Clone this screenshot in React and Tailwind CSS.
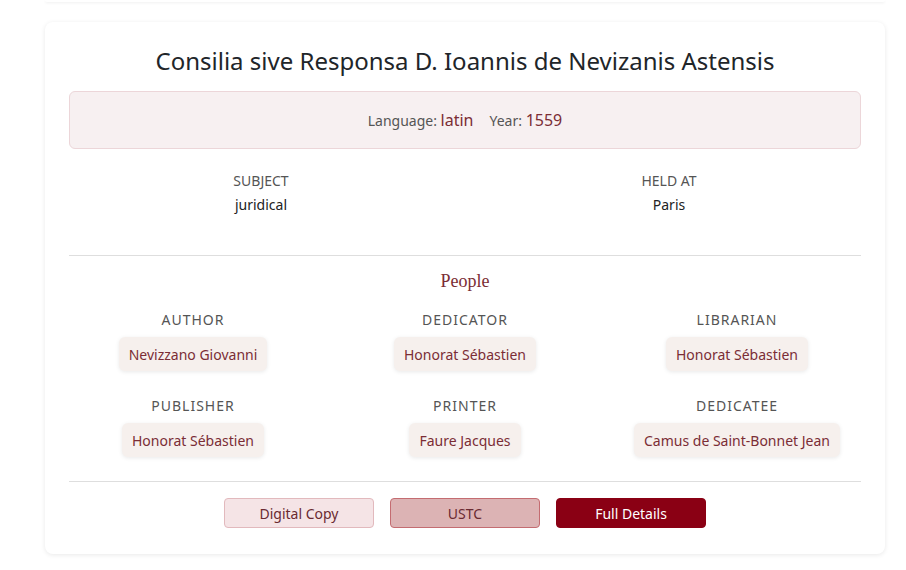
import React from 'react';

const people = [
  { role: 'Author', name: 'Nevizzano Giovanni' },
  { role: 'Dedicator', name: 'Honorat Sébastien' },
  { role: 'Librarian', name: 'Honorat Sébastien' },
  { role: 'Publisher', name: 'Honorat Sébastien' },
  { role: 'Printer', name: 'Faure Jacques' },
  { role: 'Dedicatee', name: 'Camus de Saint-Bonnet Jean' },
];

const App = () => {
  return (
    <div className="min-h-screen bg-white pl-[45px] pr-[21px] font-['Noto_Sans',sans-serif] text-[#212529]">
      {/* tail of the previous record */}
      <div className="h-[2px] bg-white rounded-b-lg shadow-[0_1px_3px_rgba(0,0,0,0.07)]" />

      {/* Record card */}
      <div className="mt-5 bg-white rounded-lg shadow-[0_1px_5px_rgba(0,0,0,0.09)] px-6 pt-6 pb-[26px]">
        <h1 className="text-center text-[24px] leading-[29px]">
          Consilia sive Responsa D. Ioannis de Nevizanis Astensis
        </h1>

        {/* Language / year */}
        <div className="mt-4 h-[58px] flex items-center justify-center gap-4 bg-[#f7f0f1] border border-[#ecd6d9] rounded-md">
          <span className="text-[14px] text-[#555]">
            Language: <span className="text-[16px] text-[#7b2d35]">latin</span>
          </span>
          <span className="text-[14px] text-[#555]">
            Year: <span className="text-[16px] text-[#7b2d35]">1559</span>
          </span>
        </div>

        {/* Subject / held at */}
        <div className="mx-[-12px] mt-[21px] grid grid-cols-2 text-center text-[14px]">
          <div>
            <div className="leading-[21px] text-[#555]">SUBJECT</div>
            <div className="mt-[3px] leading-[21px] text-[#222]">juridical</div>
          </div>
          <div>
            <div className="leading-[21px] text-[#555]">HELD AT</div>
            <div className="mt-[3px] leading-[21px] text-[#222]">Paris</div>
          </div>
        </div>

        <hr className="mt-[40px] border-t border-[#dedede]" />

        {/* People */}
        <h2 className="mt-3 text-center font-['Liberation_Serif',serif] text-[18px] leading-[27px] text-[#7b2d35]">
          People
        </h2>
        <div className="mx-[-12px] mt-[14px] grid grid-cols-3 gap-y-6 text-center">
          {people.map((p, i) => (
            <div key={i} className="flex flex-col items-center">
              <div className="text-[14px] leading-[21px] tracking-[1px] uppercase text-[#555]">{p.role}</div>
              <div className="mt-[7px] h-[34px] px-[10px] flex items-center bg-[#f6f0ed] rounded-md shadow-[0_1px_4px_rgba(0,0,0,0.09)] text-[14px] text-[#7b2d35]">
                {p.name}
              </div>
            </div>
          ))}
        </div>

        <hr className="mt-[24px] border-t border-[#dedede]" />

        {/* Actions */}
        <div className="mt-4 flex justify-center gap-4 text-[14px]">
          <button className="w-[150px] h-[30px] rounded bg-[#f5e4e6] border border-[#e2b9bd] text-[#6a2a31]">
            Digital Copy
          </button>
          <button className="w-[150px] h-[30px] rounded bg-[#dcb3b4] border border-[#c46c71] text-[#6a2a31]">
            USTC
          </button>
          <button className="w-[150px] h-[30px] rounded bg-[#8a0014] border border-[#8a0014] text-white">
            Full Details
          </button>
        </div>
      </div>
    </div>
  );
};

export default App;
